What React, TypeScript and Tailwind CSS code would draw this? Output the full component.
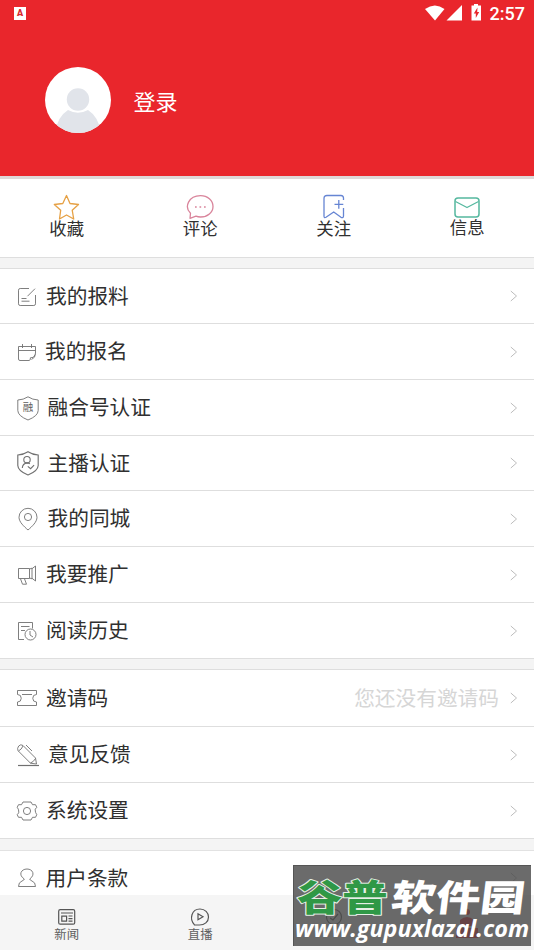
import type { ReactNode } from "react"

type Item = {
  label: string
  icon: ReactNode
  row: string
  gap: string
  hint?: string
}

const reportIcon = (
  <>
    <path d="M13 4.5H4.2Q2.5 4.5 2.5 6.2v13.6q0 1.7 1.7 1.7h13.6q1.7 0 1.7-1.7V11" />
    <path d="M19 4.7 11.5 12.2M5.5 14.5h5M5.5 17.2h8" />
  </>
)

const signUpIcon = (
  <path d="M13 20.500H4q-1.500 0-1.500-1.500V6.500h17V13q0 5-4 6.500M2.500 10.500h17M6.500 4v4M15.500 4v4M13 20.500q1.800-.2 1.400-2.700 3 .8 5-3.300" />
)

const mediaIcon = (
  <>
    <path d="M12 .8Q16.500 3.800 22.200 4V14.500Q22 20 12 24 2 20 1.800 14.500V4Q7.500 3.800 12 .8Z" />
    <text x="6.800" y="15.300" fontSize="10.500" fill="#5c5c5c" stroke="none">融</text>
  </>
)

const anchorIcon = (
  <>
    <path d="M12 .8Q16.500 3.800 22.200 4V14.500Q22 20 12 24 2 20 1.800 14.500V4Q7.500 3.800 12 .8Z" strokeWidth="1.150" />
    <circle cx="11" cy="8.700" r="3.200" strokeWidth="1.100" />
    <path d="M6.300 17q.3-4.300 4.700-5.100 2.300.2 2.800 1M11.800 15.400l2.800 2.300 3.500-3.500" strokeWidth="1.100" />
  </>
)

const cityIcon = (
  <>
    <path d="M12 23C8 19.500 3 15 3 10.300a9 9 0 0 1 18 0C21 15 16 19.500 12 23Z" />
    <circle cx="12" cy="10" r="3.600" />
  </>
)

const promoteIcon = (
  <>
    <path d="M2.500 5.500h11v10h-11zM13.500 6l2.500-.8v10.600l-2.500-.8M16 5.700l3.500-2.700v15l-3.500-2.700" />
    <path d="M4.500 15.800l2 5.400h4l-2-5.400" />
  </>
)

const historyIcon = (
  <>
    <path d="M8 20.500H2.500v-17h14v6M5 7.500h8.500M5 11.500h4" />
    <circle cx="14.500" cy="15.500" r="5.500" />
    <path d="M14 12v4l3 2" />
  </>
)

const inviteIcon = (
  <path d="M1.500 4.500h19v4a3.600 3.600 0 0 0 0 7.500v3.500h-19V16a3.600 3.600 0 0 0 0-7.500zM6 8.500h10" />
)

const feedbackIcon = (
  <>
    <path d="M2 7.700 14.500 20.200l6 .8-1-6L7 2.500Q4.800.8 2.700 3 .9 5.300 2 7.700ZM2.500 8q3-1.500 4.500-5M14.500 20q3-1 5-4.500M10 2l6 6" />
    <path d="M2 22.500h21" strokeWidth="1.200" />
  </>
)

const settingsIcon = (
  <>
    <path d="M7 3h8l1.500 2.700h3l1.300 2.600q-2.400 1.900-1.500 3.700 0 1.500 1.500 3.700l-1.300 2.600h-3L15 21H7l-1.500-2.700h-3l-1.300-2.600q2.300-1.900 1.500-3.700 0-1.800-1.500-3.700l1.300-2.600h3Z" strokeLinejoin="round" />
    <circle cx="11" cy="12" r="3.600" />
  </>
)

const termsIcon = (
  <path d="M8.300 13C2 9 5 3 11 3s8.500 6 2.700 10q.2 1.200 2.300 2 3.500 1.200 3.500 5.500h-17Q2.500 16.200 6 15q2.100-.8 2.300-2Z" />
)

const mainItems: Item[] = [
  { label: "我的报料", icon: reportIcon, row: "h-[55px]", gap: "ml-[6px]" },
  { label: "我的报名", icon: signUpIcon, row: "h-14", gap: "ml-[5px]" },
  { label: "融合号认证", icon: mediaIcon, row: "h-14", gap: "ml-[7.5px]" },
  { label: "主播认证", icon: anchorIcon, row: "h-[55px]", gap: "ml-[7.5px]" },
  { label: "我的同城", icon: cityIcon, row: "h-14", gap: "ml-[7.5px]" },
  { label: "我要推广", icon: promoteIcon, row: "h-14", gap: "ml-[6px]" },
  { label: "阅读历史", icon: historyIcon, row: "h-14", gap: "ml-[6px]" },
]

const otherItems: Item[] = [
  { label: "邀请码", icon: inviteIcon, row: "h-[57px]", gap: "ml-[6px]", hint: "您还没有邀请码" },
  { label: "意见反馈", icon: feedbackIcon, row: "h-14", gap: "ml-[8px]" },
  { label: "系统设置", icon: settingsIcon, row: "h-14", gap: "ml-[6px]" },
]

const termItems: Item[] = [
  { label: "用户条款", icon: termsIcon, row: "h-[55px]", gap: "ml-[5.5px]" },
]

function Row({ item }: { item: Item }) {
  return (
    <div className={`flex items-center border-b border-[#dedede] pl-4 pr-4 ${item.row}`}>
      <svg className="size-6 shrink-0 overflow-visible" viewBox="0 0 24 24" fill="none" stroke="#707070" strokeWidth="0.9">
        {item.icon}
      </svg>
      <span className={`-mt-[3px] text-[20.7px] leading-6 text-[#303030] ${item.gap}`}>{item.label}</span>
      <span className="-mt-[3px] ml-auto mr-[11px] text-[20.7px] leading-6 text-[#d6d6d6]">{item.hint}</span>
      <svg className="h-3 w-2" viewBox="0 0 8 12" fill="none" stroke="#bdbdbd" strokeWidth="1">
        <path d="M.8 1l5.700 5L.8 11" />
      </svg>
    </div>
  )
}

function Quick({ label, color, up, children }: { label: string; color: string; up?: boolean; children: ReactNode }) {
  return (
    <div className="flex flex-1 flex-col items-center pt-[14px]">
      <svg className="h-7 w-7" viewBox="0 0 28 28" fill="none" stroke={color} strokeWidth="1.3" strokeLinejoin="round">
        {children}
      </svg>
      <span className={`text-[17.4px] leading-5 text-[#303030] ${up ? "-mt-[4px]" : "-mt-[3px]"}`}>{label}</span>
    </div>
  )
}

function Tab({ label, children }: { label?: string; children: ReactNode }) {
  return (
    <div className="flex flex-1 flex-col items-center pt-3">
      <svg className="size-5 overflow-visible" viewBox="0 0 20 20" fill="none" stroke="#555" strokeWidth="1.2">
        {children}
      </svg>
      {label && <span className="text-[12.4px] leading-[15px] text-[#606060]">{label}</span>}
    </div>
  )
}

function Watermark() {
  return (
    <div className="absolute top-[865px] left-[293px] h-[81px] w-[238px] border-t border-l border-[#555] bg-[#4a4a4a]/82">
      <svg className="h-full w-full overflow-visible" viewBox="0 0 238 81">
        <g fontWeight="900" fontSize="37" strokeLinejoin="round" paintOrder="stroke">
          <text x="2" y="46" textLength="92" lengthAdjust="spacingAndGlyphs" fill="#2f9846" stroke="#e6efe6" strokeWidth="2">谷普</text>
          <text x="102" y="46" textLength="135" lengthAdjust="spacingAndGlyphs" fill="#fff" transform="skewX(-7)">软件园</text>
        </g>
        <text
          x="0"
          y="72"
          fontSize="24"
          fontWeight="700"
          fontStyle="italic"
          fontFamily="Open Sans, sans-serif"
          textLength="237"
          lengthAdjust="spacingAndGlyphs"
          fill="#fff"
        >
          www.gupuxlazal.com
        </text>
      </svg>
    </div>
  )
}

export default function App() {
  return (
    <div className="relative flex h-[950px] w-[534px] flex-col overflow-hidden bg-white font-['Noto_Sans_CJK_SC',sans-serif]">
      <header className="h-[179px] shrink-0 border-b-[3px] border-[#dfd8d8] bg-[#e9262c]">
        <div className="flex h-[26px] items-center pl-[14px] pr-[9px] text-white">
          <div className="mt-px flex h-[13px] w-3 items-center justify-center bg-white font-['Roboto',sans-serif] text-[9px] font-black text-[#d8282e]">A</div>
          <svg className="ml-auto h-[18px] w-[60px]" viewBox="0 0 60 18" fill="#fff">
            <path d="M0 5Q10-2 19.500 5L10 16.500Z" />
            <path d="M37 1v15.500H21.500Z" />
            <path d="M46.500 1.500h2.500V0h4v1.500h3V16.500h-9.500Z" />
            <path d="M52.500 3.500 48.800 9.500h2v4.500l3.400-6h-2z" fill="#e9262c" />
          </svg>
          <span className="ml-[5px] mt-[2px] font-['Roboto',sans-serif] text-[18px] leading-5 font-medium">2:57</span>
        </div>
        <div className="flex items-center pl-[45px] pt-[41px]">
          <svg className="size-[66px]" viewBox="0 0 66 66">
            <clipPath id="avatar">
              <circle cx="33" cy="33" r="33" />
            </clipPath>
            <g clipPath="url(#avatar)">
              <rect width="66" height="66" fill="#fff" />
              <circle cx="33" cy="32.500" r="11.200" fill="#e1e4ea" />
              <path d="M10 66Q12 50 23 43q10 5.500 20 0 11 7 13 23Z" fill="#e1e4ea" />
            </g>
          </svg>
          <span className="ml-[22.5px] text-[22px] leading-7 text-white">登录</span>
        </div>
      </header>

      <div className="flex h-[79px] shrink-0 border-b border-[#dedede]">
        <Quick label="收藏" color="#e6a145">
          <path d="M13.500 2.500l3.500 8 8.500 1-6.300 5.700 1.500 8.800-7.200-4-7 4 1.200-8.800L1.300 11.500l8.500-1z" />
        </Quick>
        <Quick label="评论" color="#d9849b">
          <path d="M4.500 20.300C-2 14 2.500 2.600 14.500 2.600c7 0 12.500 4.800 12.500 10.800S21.500 24 14.500 24q-2.500 0-4.500-.8L4 25.300Z" />
          <path d="M9 14h1.700M13.500 14h1.700M18 14h1.700" strokeWidth="1.700" />
        </Quick>
        <Quick label="关注" color="#6685d3">
          <path d="M23.500 7V5q0-2.500-2.500-2.500H7Q4 2.500 4 5.500V23q0 2.500 2 1.300L13.700 19l7.300 5.300q2.500 1 2.500-1.300v-8M18.800 7v8.800M14.500 11.300h8.800" />
        </Quick>
        <Quick label="信息" color="#55b89f" up>
          <rect x="2" y="5" width="24" height="19" rx="3" strokeWidth="1.5" />
          <path d="M2.500 8.500 14 14.500l11.500-6" />
        </Quick>
      </div>

      <div className="h-[11px] shrink-0 border-b border-[#dedede] bg-[#f4f4f4]"></div>
      <div className="shrink-0">
        {mainItems.map((item) => (
          <Row key={item.label} item={item} />
        ))}
      </div>
      <div className="h-[11px] shrink-0 border-b border-[#dedede] bg-[#f4f4f4]"></div>
      <div className="shrink-0">
        {otherItems.map((item) => (
          <Row key={item.label} item={item} />
        ))}
      </div>
      <div className="h-3 shrink-0 border-b border-[#e2e2e2] bg-[#f4f4f4]"></div>
      <div className="h-11 shrink-0 overflow-hidden">
        {termItems.map((item) => (
          <Row key={item.label} item={item} />
        ))}
      </div>

      <nav className="flex h-[55px] shrink-0 bg-[#f5f5f5]">
        <Tab label="新闻">
          <rect x="1.700" y="2.700" width="16" height="14.500" rx="1.500" />
          <path d="M4 6h12M4.800 9.200h4.800v5H4.800zM11.500 9h4M11.500 11.600h4M11.500 14.200h4" />
        </Tab>
        <Tab label="直播">
          <path d="M4.500 17.800C-1 12 1.500 2 10 2c5 0 8.500 3.700 8.500 8 0 5-4 8-9 8H4.500Z" />
          <path d="M8 6.800v6l5-3z" />
        </Tab>
        <Tab>
          <circle cx="10" cy="10" r="7.500" />
          <path d="M6 11l3 2 5-6" />
        </Tab>
        <Tab>
          <g fill="#e9262c" stroke="none">
            <circle cx="10" cy="5" r="3" />
            <path d="M3 13q7-6 14 0v6H3zM-1 21h22v10H-1z" />
          </g>
        </Tab>
      </nav>
      <Watermark />
    </div>
  )
}
